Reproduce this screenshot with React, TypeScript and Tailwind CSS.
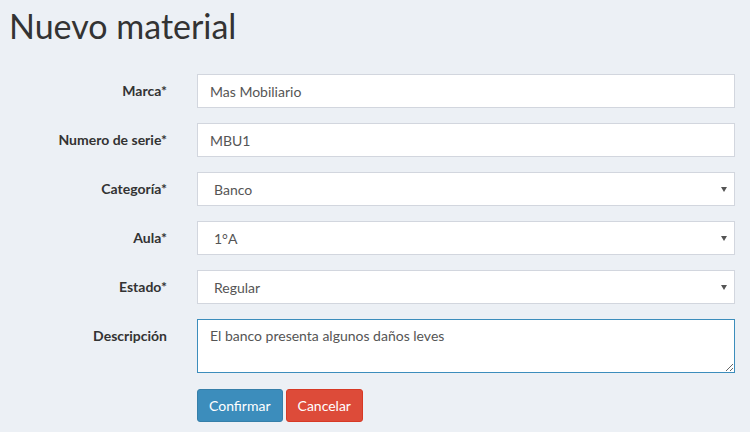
import React from 'react';

const font = { fontFamily: '"Lato", "Liberation Sans", sans-serif' };

function Row({ label, children }: { label: string; children: React.ReactNode }) {
  return (
    <div className="flex items-start">
      <label className="w-[167px] shrink-0 text-right text-[14px] font-bold leading-[20px] pt-[7px] text-[#333]">
        {label}
      </label>
      <div className="ml-[30px] w-[538px]">{children}</div>
    </div>
  );
}

function TextInput({ value }: { value: string }) {
  return (
    <input
      readOnly
      value={value}
      className="block w-full h-[34px] px-[12px] bg-white border border-[#d2d6de] text-[14px] text-[#555] outline-none"
    />
  );
}

function Select({ value }: { value: string }) {
  return (
    <div className="relative">
      <select
        defaultValue={value}
        className="block w-full h-[34px] pl-[16px] pr-[24px] bg-white border border-[#d2d6de] text-[14px] text-[#555] appearance-none outline-none"
      >
        <option>{value}</option>
      </select>
      <span className="pointer-events-none absolute right-[8px] top-[15px] w-0 h-0 border-l-[3px] border-r-[3px] border-t-[5px] border-l-transparent border-r-transparent border-t-[#555]" />
    </div>
  );
}

export default function App() {
  return (
    <div className="w-[750px] h-[432px] bg-[#ecf0f5] text-[#333] overflow-hidden" style={font}>
      <h1 className="pl-[9px] pt-[4px] text-[34px] leading-[43px] font-normal">Nuevo material</h1>

      <div className="mt-[27px] flex flex-col gap-[15px]">
        <Row label="Marca*">
          <TextInput value="Mas Mobiliario" />
        </Row>
        <Row label="Numero de serie*">
          <TextInput value="MBU1" />
        </Row>
        <Row label="Categoría*">
          <Select value="Banco" />
        </Row>
        <Row label="Aula*">
          <Select value="1°A" />
        </Row>
        <Row label="Estado*">
          <Select value="Regular" />
        </Row>
        <Row label="Descripción">
          <textarea
            readOnly
            value="El banco presenta algunos daños leves"
            className="block w-full h-[54px] px-[12px] py-[6px] bg-white border border-[#3c8dbc] text-[14px] leading-[20px] text-[#555] outline-none"
          />
        </Row>
        <Row label="">
          <div className="mt-[1px] flex gap-[3px]">
            <button className="h-[33px] px-[11px] rounded-[3px] bg-[#3c8dbc] border border-[#367fa9] text-white text-[14px]">
              Confirmar
            </button>
            <button className="h-[33px] px-[11px] rounded-[3px] bg-[#dd4b39] border border-[#d73925] text-white text-[14px]">
              Cancelar
            </button>
          </div>
        </Row>
      </div>
    </div>
  );
}
